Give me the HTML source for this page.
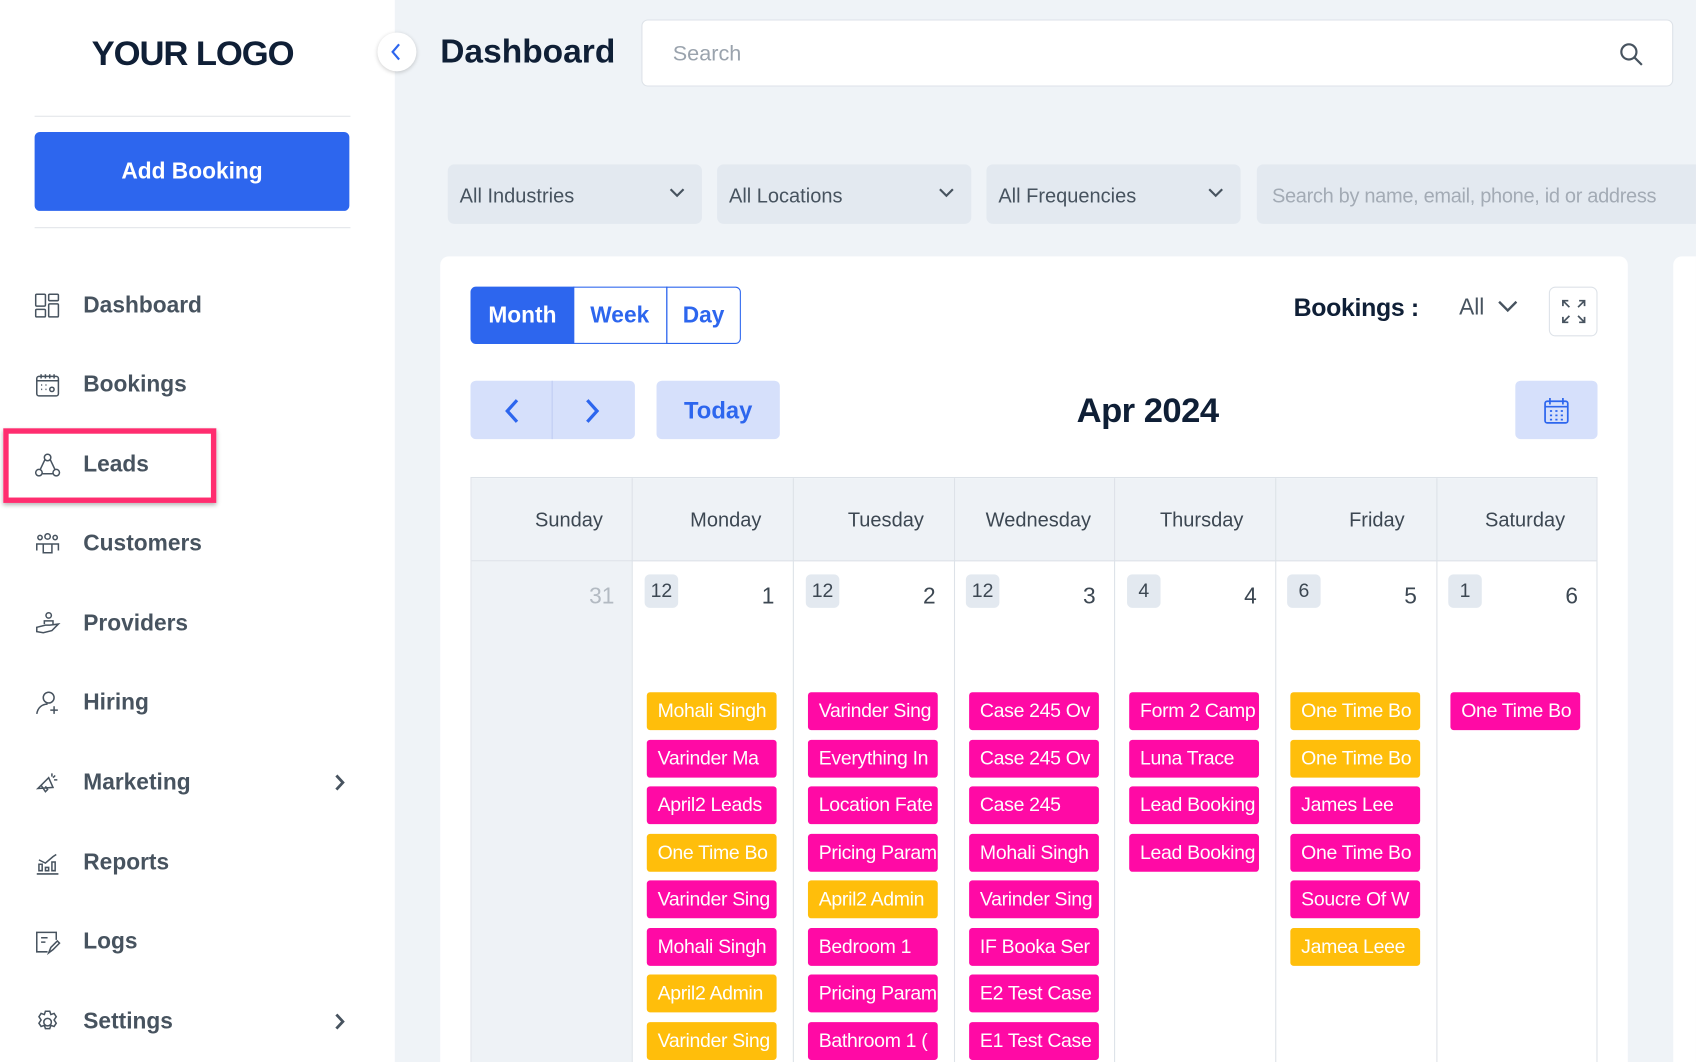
<!DOCTYPE html>
<html><head><meta charset="utf-8"><style>
*{box-sizing:border-box;margin:0;padding:0}
html,body{width:1696px;height:1062px;overflow:hidden;background:#eff3f7;font-family:"Liberation Sans",sans-serif}
#w{position:absolute;left:0;top:0;width:1568px;height:982px;transform:scale(1.0816);transform-origin:0 0;background:#eff3f7;overflow:hidden}
.a{position:absolute}
#side{left:0;top:0;width:365px;height:982px;background:#fff}
.logo{left:0;width:356px;top:31px;text-align:center;font-size:32px;font-weight:bold;color:#0f1f36;letter-spacing:-1px}
.hr{left:32px;width:292px;height:1px;background:#e2e5e9}
.btn{left:32px;top:122px;width:291px;height:73px;background:#2d66ee;border-radius:5px;color:#fff;font-size:21px;font-weight:bold;text-align:center;line-height:73px}
.nav{left:32px;height:30px;display:flex;align-items:center;font-size:21px;font-weight:bold;color:#47535f}
.nav svg{width:24px;height:24px;margin-right:21px;fill:none;stroke:#47535f;stroke-width:1.4}
.hl{left:3px;top:396px;width:197px;height:69px;border:5px solid #ff2d6f;box-shadow:0 2px 4px rgba(0,0,0,.3)}
.col{left:349px;top:30px;width:36px;height:36px;border-radius:50%;background:#fff;box-shadow:0 1px 4px rgba(0,0,0,.2)}
.title{left:407px;top:30px;font-size:31px;font-weight:bold;color:#0f1f36}
.search{left:593px;top:18px;width:954px;height:62px;background:#fff;border:1px solid #dde2e8;border-radius:6px;font-size:20px;color:#9aa3ad;padding:20px 0 0 28px}
.f{top:152px;height:55px;background:#e3e9f0;border-radius:6px;font-size:18.5px;color:#47535f;padding:18px 0 0 11px}
.f svg{position:absolute;right:16px;top:22px}
.card{background:#fff;border-radius:8px}
.seg{top:265px;height:53px;border:1px solid #2d66ee;font-size:21px;font-weight:bold;color:#2d66ee;text-align:center;line-height:51px}
.lb{background:#d6e0fb;border-radius:5px;color:#2d66ee;font-weight:bold;text-align:center}
.grid{left:435px;top:441px;width:1042px;height:560px;border:1px solid #dde2e8;border-bottom:none;overflow:hidden}
.hb{left:0;top:0;width:1042px;height:77px;background:#eef2f6;border-bottom:1px solid #dde2e8}
.hd{top:0;width:160px;height:77px;font-size:18.5px;color:#3c4752;text-align:center;line-height:77px}
.vl{top:0;width:1px;height:560px;background:#dde2e8}
.badge{width:31px;height:31px;background:#e3e9f0;border-radius:5px;font-size:18px;color:#3c4752;text-align:center;line-height:31px}
.dn{font-size:21px;color:#3c4752;text-align:right;width:40px}
.ev{width:120px;height:35px;border-radius:3px;color:#fff;font-size:18px;line-height:35px;padding-left:10px;white-space:nowrap;overflow:hidden;letter-spacing:-0.3px}
.ev+.ev{margin-top:8.5px}
.P{background:#ff0aa5}.Y{background:#ffbe0b}
</style></head><body><div id="w">
<div class="a" id="side"></div>
<div class="a logo">YOUR LOGO</div>
<div class="a hr" style="top:107px"></div>
<div class="a btn">Add Booking</div>
<div class="a hr" style="top:210px"></div>

<div class="a nav" style="top:268px"><svg viewBox="0 0 24 24"><rect x="1" y="1" width="9" height="11" rx="1"/><rect x="13" y="1" width="9" height="6" rx="1"/><rect x="1" y="15" width="9" height="7" rx="1"/><rect x="13" y="10" width="9" height="12" rx="1"/></svg>Dashboard</div>
<div class="a nav" style="top:341px"><svg viewBox="0 0 24 24"><rect x="2" y="4" width="20" height="18" rx="2"/><path d="M6 2v4M10 2v4M14 2v4M18 2v4M2 8h20M6 12h1M10 12h1M6 16h1M10 16h1"/><circle cx="16" cy="16" r="2"/></svg>Bookings</div>
<div class="a nav" style="top:415px"><svg viewBox="0 0 24 24"><circle cx="12" cy="5" r="3"/><circle cx="4" cy="19" r="3"/><circle cx="20" cy="19" r="3"/><path d="M9.5 7 5 16.5M14.5 7 19 16.5M7 20h10"/></svg>Leads</div>
<div class="a nav" style="top:488px"><svg viewBox="0 0 24 24"><circle cx="5" cy="6" r="2"/><circle cx="12" cy="5" r="2.5"/><circle cx="19" cy="6" r="2"/><path d="M2 18v-6h6M16 12h6v6M8 20v-8h8v8z"/></svg>Customers</div>
<div class="a nav" style="top:562px"><svg viewBox="0 0 24 24"><circle cx="13" cy="4" r="2.5"/><path d="M9 12v-3h8v3M2 15l8-2h4l8-1-6 6-8 2-6-1z"/></svg>Providers</div>
<div class="a nav" style="top:635px"><svg viewBox="0 0 24 24"><circle cx="13" cy="7" r="5"/><path d="M2 22c1-6 5-9 10-9M18 15v7M14.5 18.5h7"/></svg>Hiring</div>
<div class="a nav" style="top:709px"><svg viewBox="0 0 24 24"><path d="M3 17l10-10 4 9zM6 14l4 6 2-2-2-3M16 3v3M19 5l-2 2M21 9h-3"/></svg>Marketing</div>
<div class="a nav" style="top:783px"><svg viewBox="0 0 24 24"><path d="M2 22h20M4 19v-6h3v6zM10 19v-3h3v3zM16 19v-8h3v8zM4 9l6 3 7-6 3-2"/></svg>Reports</div>
<div class="a nav" style="top:856px"><svg viewBox="0 0 24 24"><path d="M20 10V3H2v18h10M6 8h6M6 12h4M13 22l2-5 6-6 2 2-6 6z"/></svg>Logs</div>
<div class="a nav" style="top:930px"><svg viewBox="0 0 24 24"><circle cx="12" cy="12" r="3.5"/><path d="M10 2h4l1 3 3-1 2 3-2 3 2 3-2 3-3-1-1 3h-4l-1-3-3 1-2-3 2-3-2-3 2-3 3 1z"/></svg>Settings</div>
<svg class="a" style="left:309px;top:715px" width="10" height="17" viewBox="0 0 10 17" fill="none" stroke="#47535f" stroke-width="2.6"><path d="M2 2l6 6.5L2 15"/></svg>
<svg class="a" style="left:309px;top:936px" width="10" height="17" viewBox="0 0 10 17" fill="none" stroke="#47535f" stroke-width="2.6"><path d="M2 2l6 6.5L2 15"/></svg>
<div class="a hl"></div>

<div class="a col"></div>
<svg class="a" style="left:361px;top:39px" width="10" height="18" viewBox="0 0 10 18" fill="none" stroke="#2d66ee" stroke-width="2"><path d="M8 2L2 9l6 7"/></svg>
<div class="a title">Dashboard</div>
<div class="a search">Search<svg class="a" style="right:26px;top:19px" width="24" height="24" viewBox="0 0 24 24" fill="none" stroke="#47535f" stroke-width="2"><circle cx="10" cy="10" r="7"/><path d="M15 15l7 7"/></svg></div>

<div class="a f" style="left:414px;width:235px">All Industries<svg width="14" height="9" viewBox="0 0 14 9" fill="none" stroke="#47535f" stroke-width="2"><path d="M1 1l6 6 6-6"/></svg></div>
<div class="a f" style="left:663px;width:235px">All Locations<svg width="14" height="9" viewBox="0 0 14 9" fill="none" stroke="#47535f" stroke-width="2"><path d="M1 1l6 6 6-6"/></svg></div>
<div class="a f" style="left:912px;width:235px">All Frequencies<svg width="14" height="9" viewBox="0 0 14 9" fill="none" stroke="#47535f" stroke-width="2"><path d="M1 1l6 6 6-6"/></svg></div>
<div class="a f" style="left:1162px;width:420px;color:#a3abb5;padding-left:14px"><div style="width:360px;overflow:hidden;white-space:nowrap;letter-spacing:-0.3px">Search by name, email, phone, id or address</div></div>

<div class="a card" style="left:407px;top:237px;width:1098px;height:760px"></div>
<div class="a card" style="left:1547px;top:237px;width:60px;height:760px"></div>

<div class="a seg" style="left:435px;width:96px;background:#2d66ee;color:#fff;border-radius:5px 0 0 5px">Month</div>
<div class="a seg" style="left:530px;width:87px;border-left:none">Week</div>
<div class="a seg" style="left:616px;width:69px;border-radius:0 5px 5px 0">Day</div>

<div class="a" style="left:1196px;top:271px;font-size:23px;font-weight:bold;color:#0f1f36;letter-spacing:-0.3px">Bookings :</div>
<div class="a" style="left:1349px;top:273px;font-size:21px;color:#47535f">All</div>
<svg class="a" style="left:1385px;top:278px" width="18" height="12" viewBox="0 0 18 12" fill="none" stroke="#47535f" stroke-width="2.2"><path d="M1 1l8 8 8-8"/></svg>
<div class="a" style="left:1432px;top:265px;width:45px;height:46px;border:1px solid #dde2e8;border-radius:6px"></div>
<svg class="a" style="left:1443px;top:276px" width="24" height="24" viewBox="0 0 24 24" fill="none" stroke="#47535f" stroke-width="1.6"><path d="M2 7V2h5M2 2l6 6M17 2h5v5M22 2l-6 6M2 17v5h5M2 22l6-6M22 17v5h-5M22 22l-6-6"/></svg>

<div class="a lb" style="left:435px;top:352px;width:152px;height:54px"></div>
<div class="a" style="left:510px;top:352px;width:1px;height:54px;background:#bfcdf3"></div>
<svg class="a" style="left:466px;top:368px" width="14" height="24" viewBox="0 0 14 24" fill="none" stroke="#2d66ee" stroke-width="3"><path d="M12 2L3 12l9 10"/></svg>
<svg class="a" style="left:541px;top:368px" width="14" height="24" viewBox="0 0 14 24" fill="none" stroke="#2d66ee" stroke-width="3"><path d="M2 2l9 10-9 10"/></svg>
<div class="a lb" style="left:607px;top:352px;width:114px;height:54px;line-height:56px;font-size:22px">Today</div>
<div class="a" style="left:960px;top:361px;width:202px;text-align:center;font-size:32px;font-weight:bold;color:#0f1f36;letter-spacing:-0.5px">Apr 2024</div>
<div class="a lb" style="left:1401px;top:352px;width:76px;height:54px"></div>
<svg class="a" style="left:1427px;top:367px" width="24" height="26" viewBox="0 0 24 26" fill="none" stroke="#2d66ee" stroke-width="1.6"><rect x="1.5" y="4" width="21" height="20" rx="2"/><path d="M6 1v6M18 1v6M1.5 9h21M6 13h2M11 13h2M16 13h2M6 17h2M11 17h2M16 17h2M6 21h2M11 21h2M16 21h2"/></svg>

<div class="a grid">
 <div class="a hb"></div>
 <div class="a" style="left:0;top:77px;width:148px;height:500px;background:#eef2f6"></div>
 <div class="a hd" style="left:10px">Sunday</div>
 <div class="a hd" style="left:155px">Monday</div>
 <div class="a hd" style="left:303px">Tuesday</div>
 <div class="a hd" style="left:444px">Wednesday</div>
 <div class="a hd" style="left:595px">Thursday</div>
 <div class="a hd" style="left:757px">Friday</div>
 <div class="a hd" style="left:894px">Saturday</div>
 <div class="a vl" style="left:148px"></div><div class="a vl" style="left:297px"></div><div class="a vl" style="left:446px"></div><div class="a vl" style="left:594px"></div><div class="a vl" style="left:743px"></div><div class="a vl" style="left:892px"></div>
</div>

<div class="a dn" style="left:528px;top:540px;color:#b3bac2">31</div>
<div class="a badge" style="left:596px;top:531px">12</div><div class="a dn" style="left:676px;top:540px">1</div>
<div class="a badge" style="left:745px;top:531px">12</div><div class="a dn" style="left:825px;top:540px">2</div>
<div class="a badge" style="left:893px;top:531px">12</div><div class="a dn" style="left:973px;top:540px">3</div>
<div class="a badge" style="left:1042px;top:531px">4</div><div class="a dn" style="left:1122px;top:540px">4</div>
<div class="a badge" style="left:1190px;top:531px">6</div><div class="a dn" style="left:1270px;top:540px">5</div>
<div class="a badge" style="left:1339px;top:531px">1</div><div class="a dn" style="left:1419px;top:540px">6</div>

<div class="a" style="left:598px;top:640px">
<div class="ev Y">Mohali Singh</div><div class="ev P">Varinder Ma</div><div class="ev P">April2 Leads</div><div class="ev Y">One Time Bo</div><div class="ev P">Varinder Sing</div><div class="ev P">Mohali Singh</div><div class="ev Y">April2 Admin</div><div class="ev Y">Varinder Sing</div></div>
<div class="a" style="left:747px;top:640px">
<div class="ev P">Varinder Sing</div><div class="ev P">Everything In</div><div class="ev P">Location Fate</div><div class="ev P">Pricing Param</div><div class="ev Y">April2 Admin</div><div class="ev P">Bedroom 1</div><div class="ev P">Pricing Param</div><div class="ev P">Bathroom 1 (</div></div>
<div class="a" style="left:896px;top:640px">
<div class="ev P">Case 245 Ov</div><div class="ev P">Case 245 Ov</div><div class="ev P">Case 245</div><div class="ev P">Mohali Singh</div><div class="ev P">Varinder Sing</div><div class="ev P">IF Booka Ser</div><div class="ev P">E2 Test Case</div><div class="ev P">E1 Test Case</div></div>
<div class="a" style="left:1044px;top:640px">
<div class="ev P">Form 2 Camp</div><div class="ev P">Luna Trace</div><div class="ev P">Lead Booking</div><div class="ev P">Lead Booking</div></div>
<div class="a" style="left:1193px;top:640px">
<div class="ev Y">One Time Bo</div><div class="ev Y">One Time Bo</div><div class="ev P">James Lee</div><div class="ev P">One Time Bo</div><div class="ev P">Soucre Of W</div><div class="ev Y">Jamea Leee</div></div>
<div class="a" style="left:1341px;top:640px"><div class="ev P">One Time Bo</div></div>
</div></body></html>
